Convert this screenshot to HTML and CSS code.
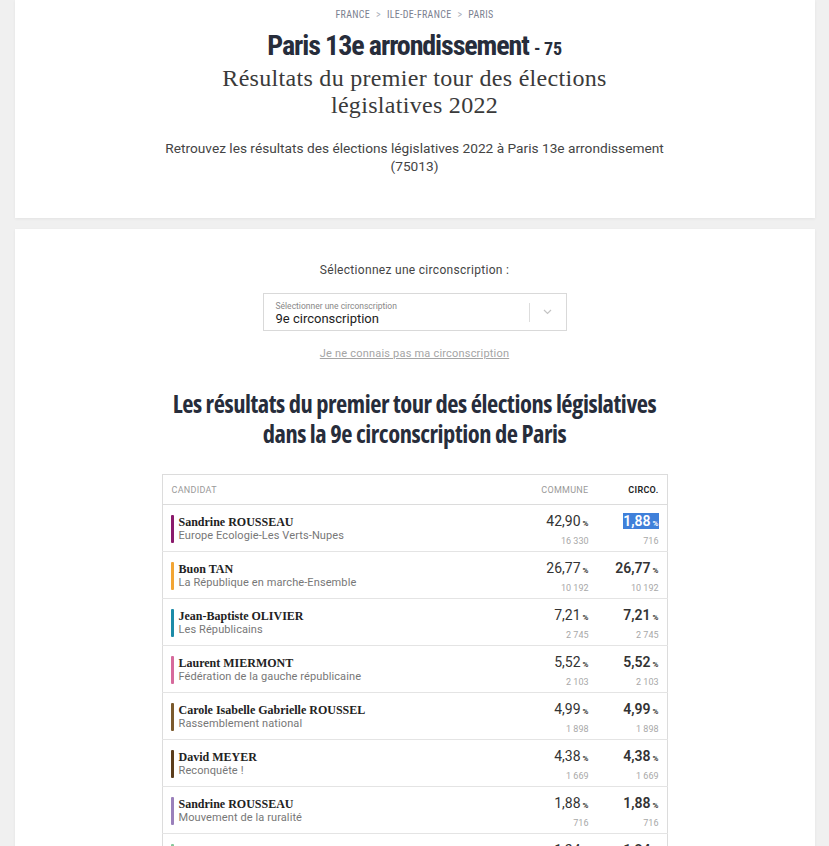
FILE: index.html
```html
<!DOCTYPE html>
<html lang="fr">
<head>
<meta charset="utf-8">
<title>Paris 13e arrondissement - Législatives 2022</title>
<link rel="stylesheet" href="styles.css">
</head>
<body>
<div class="page">
  <section class="card head">
    <nav class="crumbs"><span>FRANCE</span><span class="sep">&gt;</span><span>ILE-DE-FRANCE</span><span class="sep">&gt;</span><span>PARIS</span></nav>
    <h1 class="title">Paris 13e arrondissement <span class="dept">- 75</span></h1>
    <p class="subtitle">Résultats du premier tour des élections<br>législatives 2022</p>
    <p class="desc">Retrouvez les résultats des élections législatives 2022 à Paris 13e arrondissement<br>(75013)</p>
  </section>

  <section class="card main">
    <p class="select-label">Sélectionnez une circonscription :</p>
    <div class="select">
      <div class="select-value">
        <span class="select-hint">Sélectionner une circonscription</span>
        <span class="select-text">9e circonscription</span>
      </div>
      <span class="select-sep"></span>
      <span class="select-arrow"><svg width="9" height="6" viewBox="0 0 9 6"><path d="M1 1l3.5 3.5L8 1" fill="none" stroke="#c4c4c4" stroke-width="1.2"/></svg></span>
    </div>
    <a class="help" href="#">Je ne connais pas ma circonscription</a>

    <h2 class="results-title">Les résultats du premier tour des élections législatives<br>dans la 9e circonscription de Paris</h2>

    <table class="results">
      <thead>
        <tr><th class="c-cand">CANDIDAT</th><th class="c-num">COMMUNE</th><th class="c-num c-circo">CIRCO.</th></tr>
      </thead>
      <tbody>
        <tr>
          <td class="c-cand"><div class="cand"><span class="bar bar-eelv"></span><div><div class="name">Sandrine ROUSSEAU</div><div class="party">Europe Ecologie-Les Verts-Nupes</div></div></div></td>
          <td class="c-num"><div class="pct">42,90<small>%</small></div><div class="votes">16 330</div></td>
          <td class="c-num c-circo"><div class="pct"><span class="sel">1,88<small>%</small></span></div><div class="votes">716</div></td>
        </tr>
        <tr>
          <td class="c-cand"><div class="cand"><span class="bar bar-ens"></span><div><div class="name">Buon TAN</div><div class="party">La République en marche-Ensemble</div></div></div></td>
          <td class="c-num"><div class="pct">26,77<small>%</small></div><div class="votes">10 192</div></td>
          <td class="c-num c-circo"><div class="pct">26,77<small>%</small></div><div class="votes">10 192</div></td>
        </tr>
        <tr>
          <td class="c-cand"><div class="cand"><span class="bar bar-lr"></span><div><div class="name">Jean-Baptiste OLIVIER</div><div class="party">Les Républicains</div></div></div></td>
          <td class="c-num"><div class="pct">7,21<small>%</small></div><div class="votes">2 745</div></td>
          <td class="c-num c-circo"><div class="pct">7,21<small>%</small></div><div class="votes">2 745</div></td>
        </tr>
        <tr>
          <td class="c-cand"><div class="cand"><span class="bar bar-fgr"></span><div><div class="name">Laurent MIERMONT</div><div class="party">Fédération de la gauche républicaine</div></div></div></td>
          <td class="c-num"><div class="pct">5,52<small>%</small></div><div class="votes">2 103</div></td>
          <td class="c-num c-circo"><div class="pct">5,52<small>%</small></div><div class="votes">2 103</div></td>
        </tr>
        <tr>
          <td class="c-cand"><div class="cand"><span class="bar bar-rn"></span><div><div class="name">Carole Isabelle Gabrielle ROUSSEL</div><div class="party">Rassemblement national</div></div></div></td>
          <td class="c-num"><div class="pct">4,99<small>%</small></div><div class="votes">1 898</div></td>
          <td class="c-num c-circo"><div class="pct">4,99<small>%</small></div><div class="votes">1 898</div></td>
        </tr>
        <tr>
          <td class="c-cand"><div class="cand"><span class="bar bar-rec"></span><div><div class="name">David MEYER</div><div class="party">Reconquête !</div></div></div></td>
          <td class="c-num"><div class="pct">4,38<small>%</small></div><div class="votes">1 669</div></td>
          <td class="c-num c-circo"><div class="pct">4,38<small>%</small></div><div class="votes">1 669</div></td>
        </tr>
        <tr>
          <td class="c-cand"><div class="cand"><span class="bar bar-mr"></span><div><div class="name">Sandrine ROUSSEAU</div><div class="party">Mouvement de la ruralité</div></div></div></td>
          <td class="c-num"><div class="pct">1,88<small>%</small></div><div class="votes">716</div></td>
          <td class="c-num c-circo"><div class="pct">1,88<small>%</small></div><div class="votes">716</div></td>
        </tr>
        <tr>
          <td class="c-cand"><div class="cand"><span class="bar bar-eco"></span><div><div class="name">Béatrice SCHAEFFER</div><div class="party">Ecologiste</div></div></div></td>
          <td class="c-num"><div class="pct">1,24<small>%</small></div><div class="votes">472</div></td>
          <td class="c-num c-circo"><div class="pct">1,24<small>%</small></div><div class="votes">472</div></td>
        </tr>
      </tbody>
    </table>
  </section>
</div>
</body>
</html>
```

FILE: styles.css
```css
html, body {
  margin: 0;
  padding: 0;
  background: #f0f0f0;
}
body {
  font-family: "Roboto", "Liberation Sans", sans-serif;
  color: #333;
}
.page {
  width: 800px;
  margin: 0 auto;
  display: flex;
  flex-direction: column;
  gap: 11px;
}
.card {
  background: #fff;
  box-shadow: 0 1px 3px rgba(0,0,0,0.06);
}
.head {
  height: 218px;
  box-sizing: border-box;
  padding-top: 9px;
  text-align: center;
}
.crumbs {
  font-family: "Roboto", sans-serif;
  font-stretch: 75%;
  font-size: 10px;
  line-height: 12px;
  color: #7b8190;
  letter-spacing: 0.3px;
  display: flex;
  justify-content: center;
  gap: 6px;
}
.crumbs .sep { color: #a8adb8; }
.title {
  margin: 9px 0 0;
  font-family: "Roboto", sans-serif;
  font-stretch: 75%;
  font-weight: 700;
  font-size: 28px;
  line-height: 32px;
  color: #272d3b;
  letter-spacing: -1.1px;
}
.title .dept { font-size: 18px; letter-spacing: -0.3px; }
.subtitle {
  margin: 0;
  font-family: "Liberation Serif", "DejaVu Serif", serif;
  font-size: 24px;
  line-height: 27px;
  letter-spacing: 0.3px;
  color: #3a3a3a;
}
.desc {
  margin: 20px 0 0;
  font-size: 13.7px;
  line-height: 18px;
  color: #444;
}
.main {
  padding: 33px 0 0;
  height: 640px;
  display: flex;
  flex-direction: column;
  align-items: center;
}
.select-label {
  margin: 0;
  font-size: 12px;
  line-height: 16px;
  color: #444;
  letter-spacing: 0.3px;
}
.select {
  margin-top: 15px;
  width: 304px;
  height: 38px;
  box-sizing: border-box;
  border: 1px solid #d9d9d9;
  display: flex;
  align-items: center;
}
.select-value {
  flex: 1;
  display: flex;
  flex-direction: column;
  padding-left: 12px;
  padding-top: 4px;
}
.select-hint {
  font-size: 8.5px;
  line-height: 10px;
  color: #888;
}
.select-text {
  font-size: 13px;
  line-height: 16px;
  color: #222;
}
.select-sep {
  width: 1px;
  height: 19px;
  background: #ddd;
}
.select-arrow {
  width: 36px;
  display: flex;
  justify-content: center;
}
.help {
  margin-top: 16px;
  font-size: 11px;
  line-height: 14px;
  color: #a5a5a5;
  text-decoration: underline;
  letter-spacing: 0.2px;
}
.results-title {
  margin: 28px 0 0;
  text-align: center;
  font-family: "Open Sans", sans-serif;
  font-stretch: 75%;
  font-weight: 700;
  font-size: 24.5px;
  line-height: 30px;
  color: #272d3b;
  letter-spacing: -0.45px;
}
.results {
  margin-top: 25px;
  width: 506px;
  border-collapse: collapse;
  border: 1px solid #dcdcdc;
}
.results th {
  height: 29px;
  font-size: 9px;
  font-weight: 400;
  color: #9a9a9a;
  letter-spacing: 0.3px;
  padding: 0;
  border-bottom: 1px solid #dcdcdc;
}
.results th.c-cand { text-align: left; padding-left: 9px; }
.results th.c-num { text-align: right; }
.results th.c-circo { color: #222; font-weight: 600; padding-right: 8px; }
.results td {
  height: 46px;
  padding: 0;
  border-bottom: 1px solid #e4e4e4;
  vertical-align: top;
}
.results td.c-cand { padding-left: 8px; }
.c-num { width: 70px; text-align: right; }
.results td.c-circo { padding-right: 8px; }
.cand {
  display: flex;
  gap: 5px;
  padding-top: 10px;
}
.bar {
  width: 3px;
  height: 28px;
  border-radius: 1px;
  flex: none;
}
.bar-eelv { background: #8a1a6c; }
.bar-ens { background: #f2a534; }
.bar-lr { background: #1c8ba8; }
.bar-fgr { background: #d66a9c; }
.bar-rn { background: #7b5a2c; }
.bar-rec { background: #5b3d1c; }
.bar-mr { background: #9a80bb; }
.bar-eco { background: #86c79a; }
.name {
  font-family: "Liberation Serif", "DejaVu Serif", serif;
  font-weight: 700;
  font-size: 12px;
  line-height: 14px;
  color: #222;
}
.party {
  font-size: 11px;
  line-height: 14px;
  color: #777;
  letter-spacing: 0.1px;
}
.pct {
  padding-top: 7px;
  font-size: 14px;
  line-height: 18px;
  color: #333;
}
.c-circo .pct { font-weight: 600; }
.pct small {
  font-size: 8px;
  font-weight: 700;
  margin-left: 2px;
}
.sel {
  background: #3f80da;
  color: #fff;
}
.votes {
  font-size: 9px;
  line-height: 12px;
  color: #a8a8a8;
  margin-top: 2px;
}
```
